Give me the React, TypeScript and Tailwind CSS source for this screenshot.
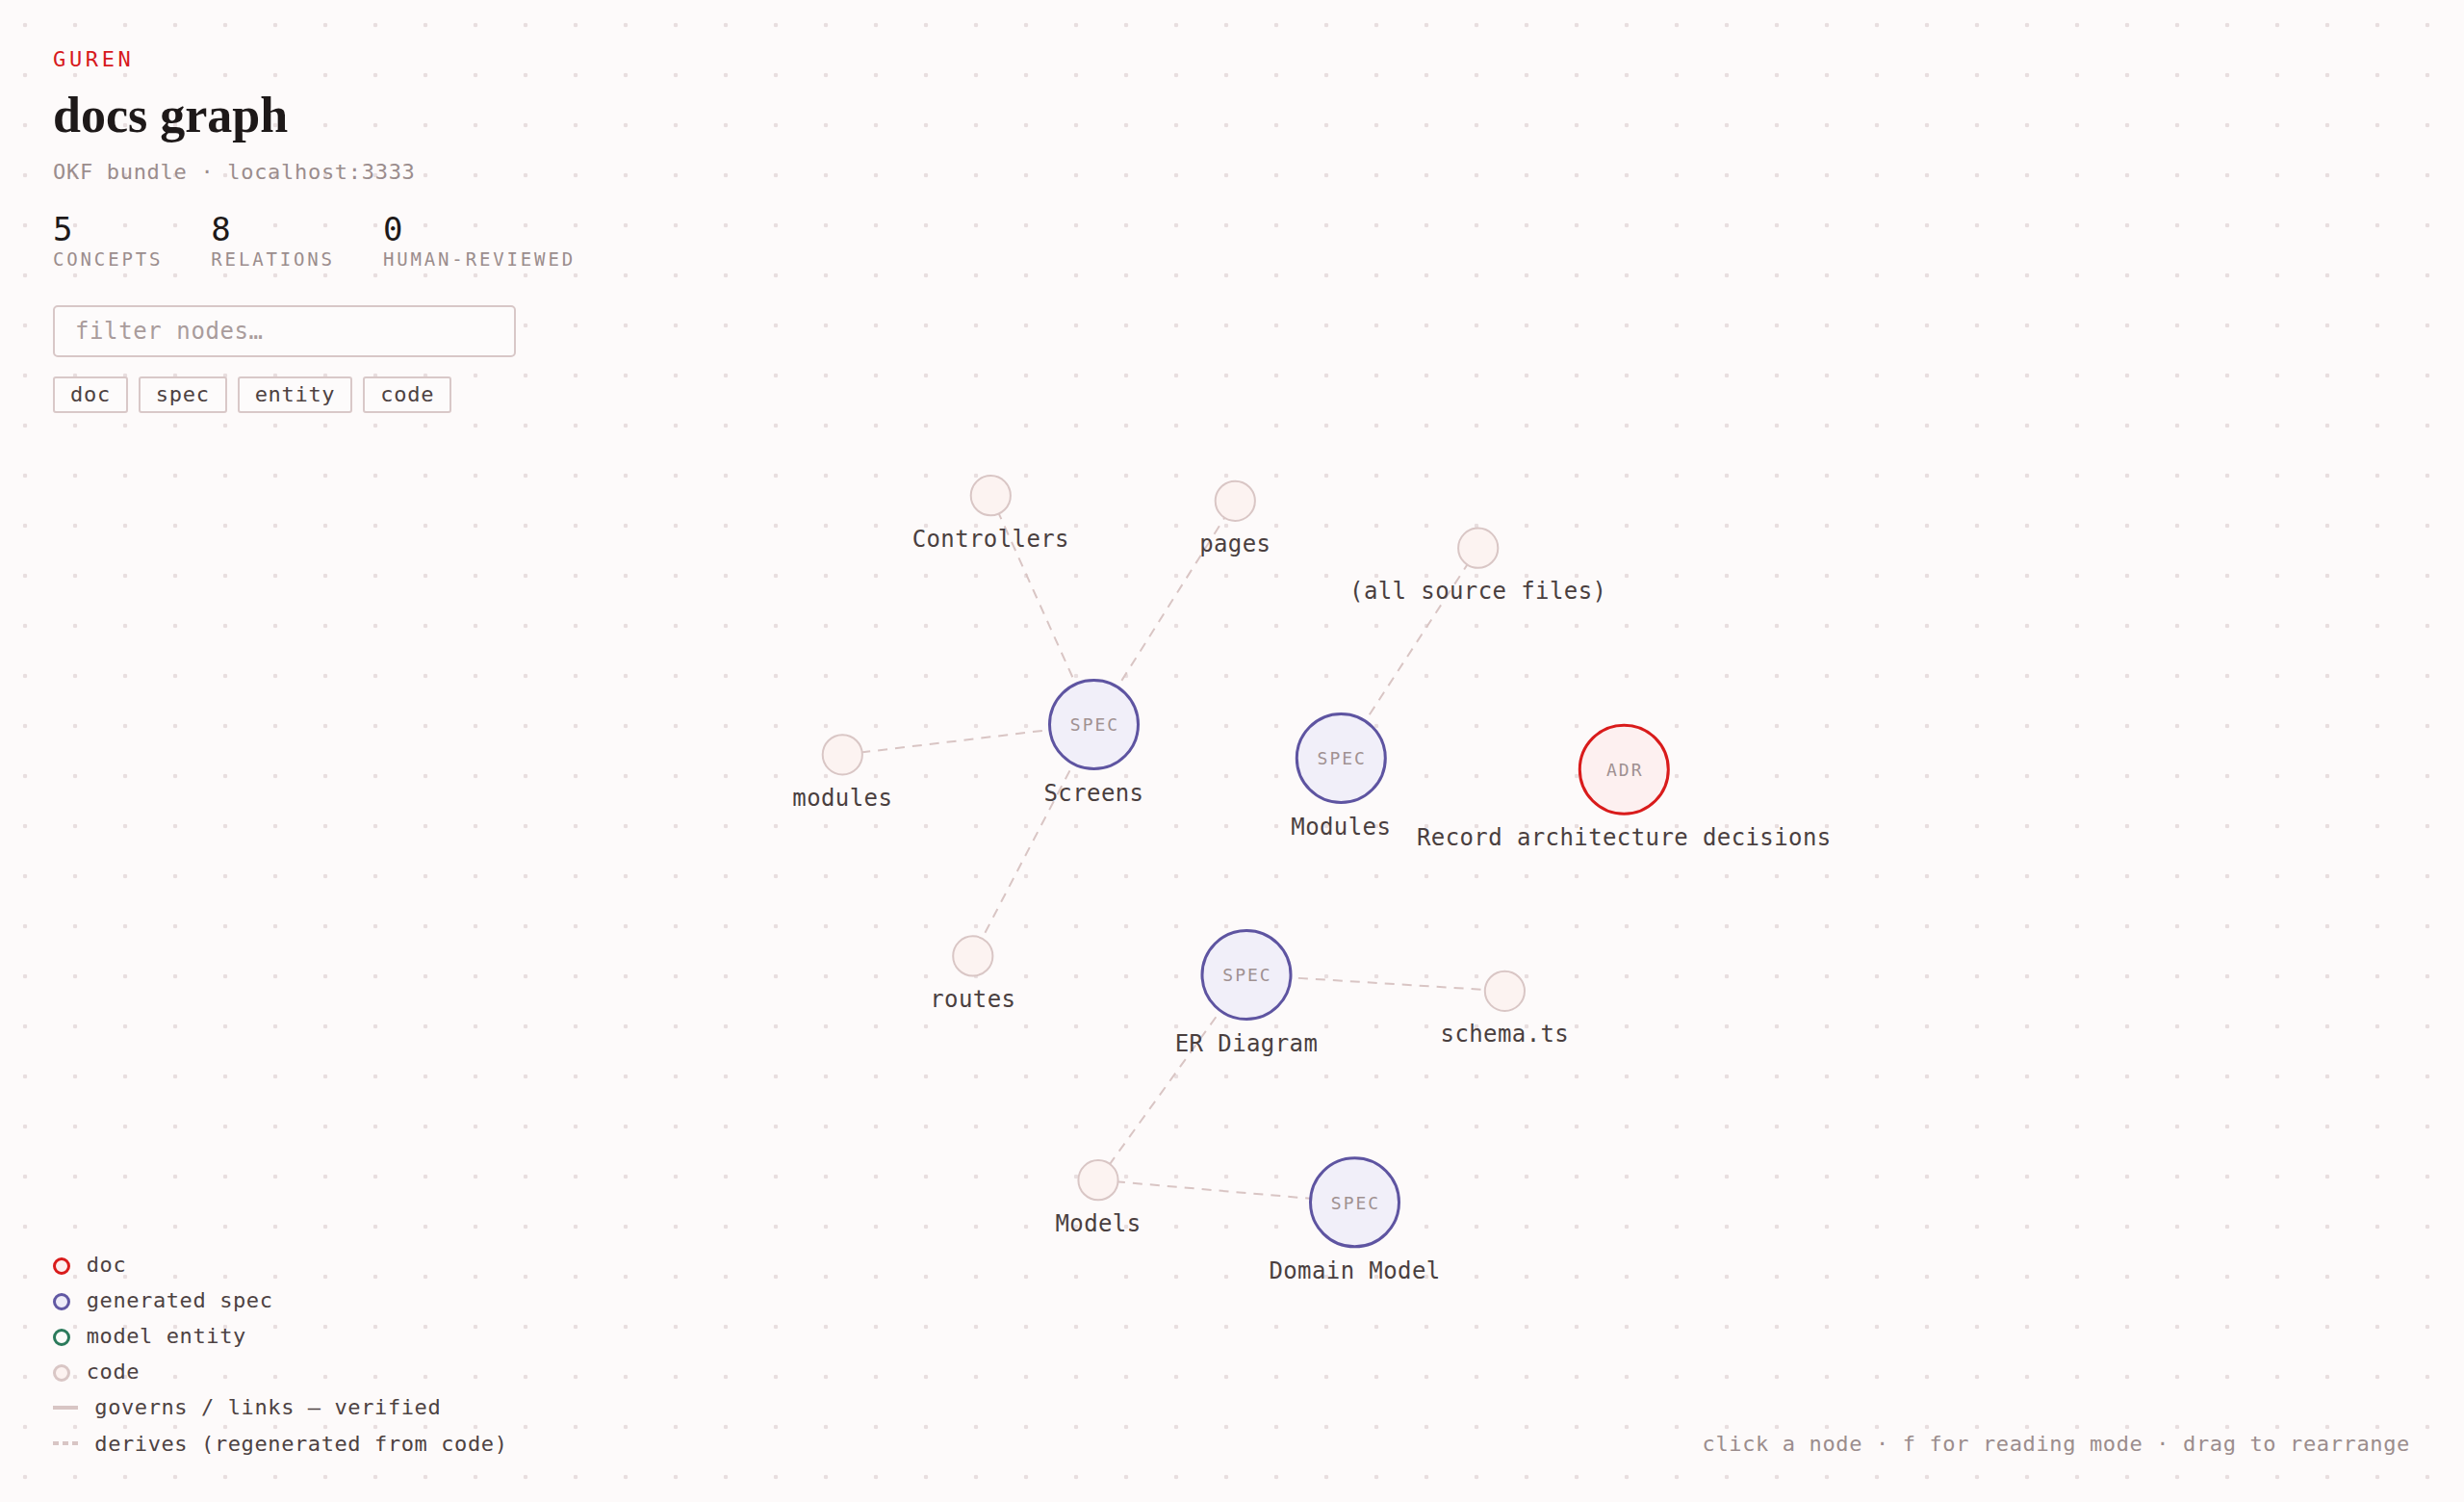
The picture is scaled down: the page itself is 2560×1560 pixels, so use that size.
import React from "react";

type Kind = "spec" | "adr" | "code";
type GNode = { id: string; x: number; y: number; kind: Kind; label: string };

const nodes: GNode[] = [
  { id: "C", x: 1029.3, y: 514.7, kind: "code", label: "Controllers" },
  { id: "P", x: 1283.3, y: 520.3, kind: "code", label: "pages" },
  { id: "A", x: 1535.7, y: 569.2, kind: "code", label: "(all source files)" },
  { id: "S", x: 1136.5, y: 752.5, kind: "spec", label: "Screens" },
  { id: "m", x: 875.3, y: 783.8, kind: "code", label: "modules" },
  { id: "M", x: 1393.3, y: 787.5, kind: "spec", label: "Modules" },
  { id: "R", x: 1687.3, y: 799.2, kind: "adr", label: "Record architecture decisions" },
  { id: "r", x: 1010.8, y: 992.9, kind: "code", label: "routes" },
  { id: "E", x: 1295, y: 1012.5, kind: "spec", label: "ER Diagram" },
  { id: "s", x: 1563.4, y: 1029.3, kind: "code", label: "schema.ts" },
  { id: "o", x: 1141, y: 1225.7, kind: "code", label: "Models" },
  { id: "D", x: 1407.5, y: 1248.8, kind: "spec", label: "Domain Model" },
];

const edges: [string, string][] = [
  ["S", "C"],
  ["S", "P"],
  ["S", "m"],
  ["S", "r"],
  ["M", "A"],
  ["E", "s"],
  ["E", "o"],
  ["o", "D"],
];

const byId = (id: string) => nodes.find((n) => n.id === id)!;

const nodeStyle: Record<Kind, { r: number; sw: number; fill: string; stroke: string; tag?: string }> = {
  spec: { r: 46, sw: 3, fill: "#f1eff9", stroke: "#5e54a1", tag: "SPEC" },
  adr: { r: 46, sw: 3, fill: "#fdf0f0", stroke: "#d91b1b", tag: "ADR" },
  code: { r: 20.6, sw: 2, fill: "#fcf3f1", stroke: "#d9c6c5" },
};

function Graph() {
  return (
    <svg
      className="absolute inset-0"
      width={2560}
      height={1560}
      viewBox="0 0 2560 1560"
      fontFamily="'DejaVu Sans Mono', monospace"
    >
      {edges.map(([a, b]) => {
        const na = byId(a);
        const nb = byId(b);
        return (
          <line
            key={a + b}
            x1={na.x}
            y1={na.y}
            x2={nb.x}
            y2={nb.y}
            stroke="#d9c5c4"
            strokeWidth={2}
            strokeDasharray="10 8"
          />
        );
      })}
      {nodes.map((n) => {
        const st = nodeStyle[n.kind];
        return (
          <circle key={n.id} cx={n.x} cy={n.y} r={st.r} fill={st.fill} stroke={st.stroke} strokeWidth={st.sw} />
        );
      })}
      {nodes.map((n) => {
        const st = nodeStyle[n.kind];
        const outer = st.r + st.sw / 2;
        return (
          <g key={n.id + "t"}>
            {st.tag && (
              <text
                x={n.x + 1}
                y={n.y + 6.8}
                textAnchor="middle"
                fontSize={18}
                letterSpacing={2}
                fill="#a09191"
              >
                {st.tag}
              </text>
            )}
            <text
              x={n.x}
              y={n.y + outer + 31.5}
              textAnchor="middle"
              fontSize={24}
              letterSpacing={0.4}
              fill="#4a3f3f"
            >
              {n.label}
            </text>
          </g>
        );
      })}
    </svg>
  );
}

function Stat({ value, label }: { value: string; label: string }) {
  return (
    <div className="flex flex-col">
      <div className="text-[34px] leading-[34px] text-[#1e1919]">{value}</div>
      <div className="mt-[5.8px] text-[19px] leading-[19px] tracking-[2.85px] text-[#9b8d8d]">{label}</div>
    </div>
  );
}

function Tag({ children }: { children: React.ReactNode }) {
  return (
    <div className="flex h-[38px] items-center rounded-[3px] border-2 border-[#d9c8c8] bg-[#fdfbfb] px-[16px] text-[22px] tracking-[0.7px] text-[#4d4242]">
      {children}
    </div>
  );
}

function LegendDot({ border, fill, label }: { border: string; fill: string; label: string }) {
  return (
    <div className="flex h-[37.1px] items-center gap-[16.7px]">
      <span className={`mt-[3px] block size-[18px] rounded-full border-[3px] ${border} ${fill}`} />
      <span className="leading-[37.1px]">{label}</span>
    </div>
  );
}

export default function App() {
  return (
    <div className="relative h-[1560px] w-full overflow-hidden bg-[#fdfafa] bg-[radial-gradient(circle,#e8dedf_2px,transparent_2.6px)] bg-[length:52px_52px] font-['DejaVu_Sans_Mono',monospace]">
      <Graph />
      <div className="relative flex h-full flex-col justify-between px-[55px] pt-[51px] pb-[42.4px]">
        <div className="flex flex-col items-start">
          <div className="text-[22px] leading-[21px] tracking-[3.65px] text-[#d7191c]">GUREN</div>
          <h1 className="mt-[22px] font-['Liberation_Serif',serif] text-[52px] leading-[52px] font-bold text-[#1e1919]">
            docs graph
          </h1>
          <div className="mt-[21.6px] text-[22px] leading-[22px] tracking-[0.7px] text-[#9b8d8d]">
            OKF bundle · localhost:3333
          </div>
          <div className="mt-[31px] flex gap-[50px]">
            <Stat value="5" label="CONCEPTS" />
            <Stat value="8" label="RELATIONS" />
            <Stat value="0" label="HUMAN-REVIEWED" />
          </div>
          <input
            type="text"
            placeholder="filter nodes…"
            className="mt-[38px] h-[54px] w-[481px] rounded-[5px] border-2 border-[#d8c7c7] bg-[#fdfbfb] px-[21px] text-[24px] tracking-[0.6px] text-[#4d4242] outline-none placeholder:text-[#a99c9c]"
          />
          <div className="mt-[19.2px] flex gap-[11px]">
            <Tag>doc</Tag>
            <Tag>spec</Tag>
            <Tag>entity</Tag>
            <Tag>code</Tag>
          </div>
        </div>
        <div className="flex items-end justify-between">
          <div className="flex flex-col text-[22px] tracking-[0.6px] text-[#4d4242]">
            <LegendDot border="border-[#d91b1b]" fill="bg-[#fdeeee]" label="doc" />
            <LegendDot border="border-[#6158a3]" fill="bg-[#eeecf8]" label="generated spec" />
            <LegendDot border="border-[#2b7a5b]" fill="bg-[#fbfbf9]" label="model entity" />
            <LegendDot border="border-[#d9c6c5]" fill="bg-[#fcf2f0]" label="code" />
            <div className="flex h-[37.1px] items-center gap-[17.3px]">
              <span className="block h-[4px] w-[26px] bg-[#d8c5c4]" />
              <span className="leading-[37.1px]">governs / links — verified</span>
            </div>
            <div className="flex h-[37.1px] items-center gap-[17.3px]">
              <span className="flex w-[26px] gap-[4px]">
                <span className="block h-[4px] w-[6px] bg-[#d8c5c4]" />
                <span className="block h-[4px] w-[6px] bg-[#d8c5c4]" />
                <span className="block h-[4px] w-[6px] bg-[#d8c5c4]" />
              </span>
              <span className="leading-[37.1px]">derives (regenerated from code)</span>
            </div>
          </div>
          <div className="mr-[1px] text-[22px] leading-[37.1px] tracking-[0.63px] text-[#9b8d8d]">
            click a node · f for reading mode · drag to rearrange
          </div>
        </div>
      </div>
    </div>
  );
}
